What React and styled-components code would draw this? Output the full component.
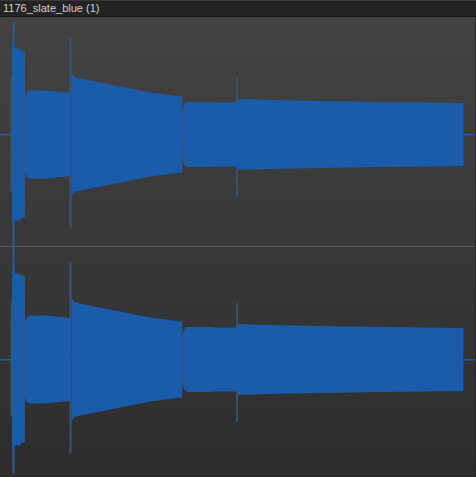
import React from "react";
import styled, { createGlobalStyle } from "styled-components";

const GlobalStyle = createGlobalStyle`
  html, body { margin: 0; padding: 0; background: #2e2e2e; }
  #root { width: 476px; height: 477px; }
`;

const Frame = styled.div`
  width: 476px;
  height: 477px;
  display: flex;
  flex-direction: column;
  overflow: hidden;
`;

const TitleBar = styled.div`
  box-sizing: border-box;
  height: 17px;
  flex: none;
  padding: 0 0 0 3px;
  background: #232323;
  border-top: 1px solid #383838;
  border-bottom: 1px solid #151515;
  color: #cecece;
  font-family: "Liberation Sans", Arial, sans-serif;
  font-size: 11px;
  line-height: 15px;
  white-space: nowrap;
`;

const WaveArea = styled.div`
  flex: 1;
  display: flex;
  flex-direction: column;
  background: linear-gradient(to bottom, #434343 0%, #383838 50%, #2d2d2d 100%);
  border-right: 1px solid #262626;
  border-bottom: 1px solid #262626;
`;

const ChannelBox = styled.div`
  height: ${(p) => p.$h}px;
  flex: none;
  overflow: hidden;
`;

const ChannelSvg = styled.svg`
  display: block;
  width: 100%;
  height: 100%;
`;

const Divider = styled.div`
  height: 1px;
  flex: none;
  background: #585a63;
`;

const BLUE = "#1b5caa";
const DIM = "#33567f";

const SPIKES = [
  { x: 10.5, w: 1.5, top: 56.5, bottom: 56.5 },
  { x: 12.3, w: 2.4, top: 112.5, bottom: 114 },
  { x: 24, w: 1, top: 83, bottom: 83 },
  { x: 69.5, w: 2, top: 96.5, bottom: 93.5 },
  { x: 181, w: 1.3, top: 39, bottom: 39 },
  { x: 236.3, w: 1.7, top: 56.5, bottom: 62.5 },
];

const BODIES = [
  [[12, 91], [13, 89], [14, 87], [15, 86], [20, 86], [20.5, 84], [24, 83]],
  [[25, 37], [25.5, 40], [26.5, 42], [28, 43.5], [30, 44], [45, 44], [55, 43], [71, 41.5]],
  [[71.5, 62], [72, 61], [74, 58], [76, 57], [80, 56], [90, 54], [100, 52], [110, 50], [120, 48], [135, 45], [150, 42], [165, 40], [181, 38]],
  [[182.3, 22], [182.8, 26], [183.6, 29], [185, 31], [187, 32.5], [212, 32.5], [212.5, 32], [236.5, 32], [237, 35.5], [270, 34.5], [320, 33.5], [380, 32.5], [426, 32], [463.5, 31.5]],
];

const bodyPath = (pts, c) => {
  const top = pts.map(([x, a]) => `${x},${(c - a).toFixed(2)}`);
  const bottom = [...pts].reverse().map(([x, a]) => `${x},${(c + a).toFixed(2)}`);
  return `M${top.join(" L")} L${bottom.join(" L")} Z`;
};

function Channel({ height, center }) {
  return (
    <ChannelBox $h={height}>
      <ChannelSvg viewBox={`0 0 475 ${height}`} preserveAspectRatio="none">
        <rect x="0" y={center - 0.5} width="475" height="1.5" fill={BLUE} />
        {SPIKES.map((s, i) => (
          <rect key={i} x={s.x} y={center - s.top} width={s.w} height={s.top + s.bottom} fill={DIM} />
        ))}
        {BODIES.map((b, i) => (
          <path key={i} d={bodyPath(b, center)} fill={BLUE} />
        ))}
      </ChannelSvg>
    </ChannelBox>
  );
}

export default function App() {
  return (
    <>
      <GlobalStyle />
      <Frame>
        <TitleBar>1176_slate_blue (1)</TitleBar>
        <WaveArea>
          <Channel height={229} center={117.5} />
          <Divider />
          <Channel height={228} center={112.5} />
        </WaveArea>
      </Frame>
    </>
  );
}
